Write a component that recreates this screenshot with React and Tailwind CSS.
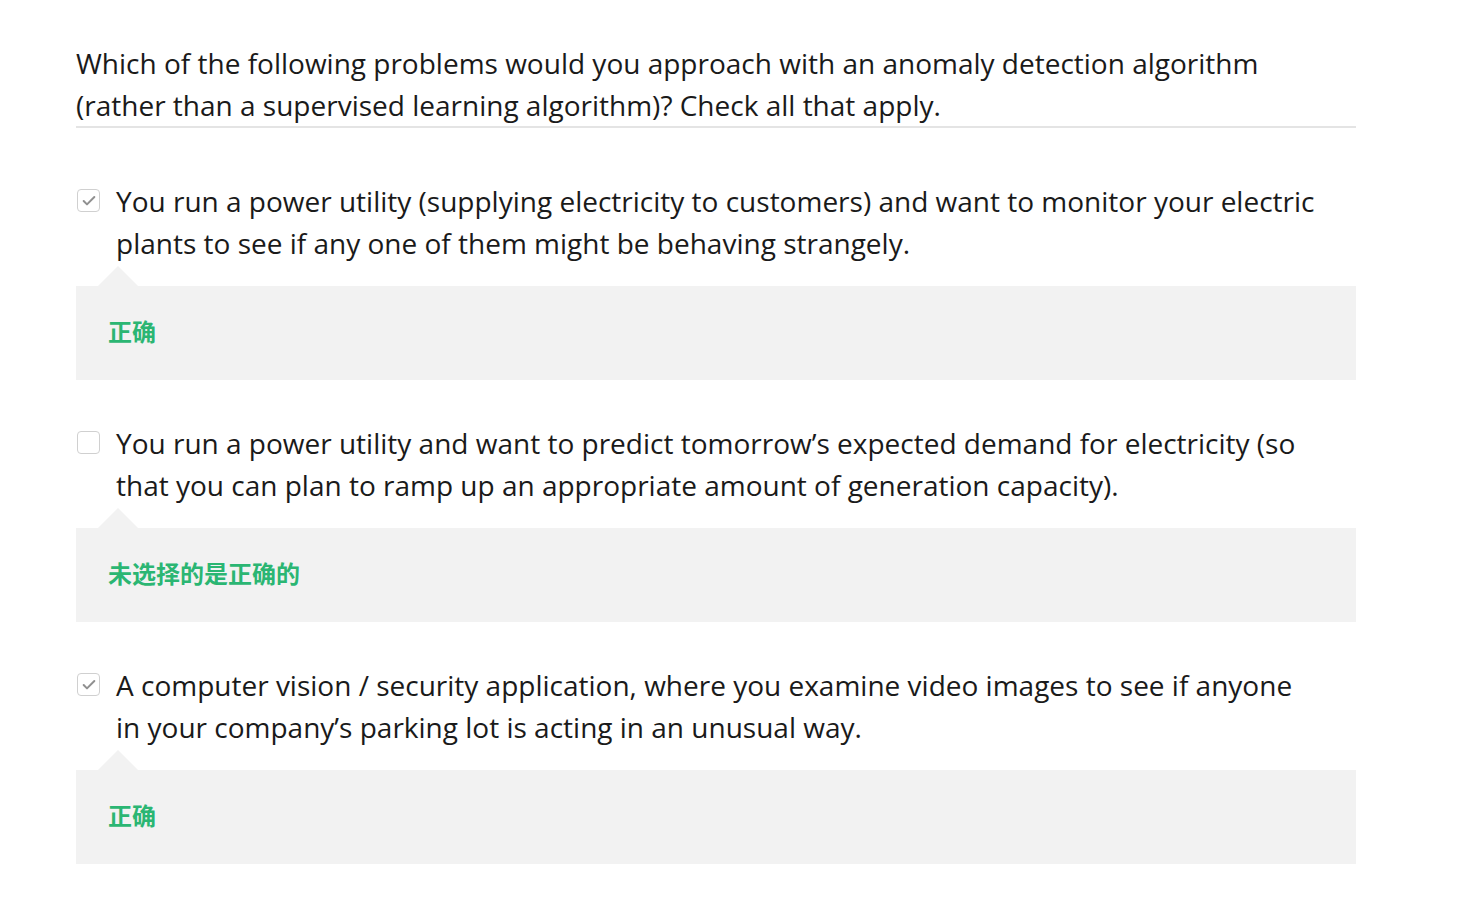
import { Check } from "lucide-react";

const options = [
  {
    text: "You run a power utility (supplying electricity to customers) and want to monitor your electric plants to see if any one of them might be behaving strangely.",
    checked: true,
    feedback: "正确",
  },
  {
    text: "You run a power utility and want to predict tomorrow’s expected demand for electricity (so that you can plan to ramp up an appropriate amount of generation capacity).",
    checked: false,
    feedback: "未选择的是正确的",
  },
  {
    text: "A computer vision / security application, where you examine video images to see if anyone in your company’s parking lot is acting in an unusual way.",
    checked: true,
    feedback: "正确",
  },
];

function Option({ text, checked, feedback }) {
  return (
    <div className="flex flex-col">
      <div className="flex flex-row items-start">
        <div className="w-[23px] h-[23px] mt-[9px] ml-px shrink-0 rounded-[4px] border border-[#d0d0d0] bg-white flex items-center justify-center">
          {checked && <Check className="w-[16px] h-[16px] text-[#909090]" strokeWidth={3} />}
        </div>
        <p className="ml-[16px] pr-[40px] text-[28px] leading-[42px] text-[#1a1a1a]">{text}</p>
      </div>
      <div className="relative mt-[22px] bg-[#f2f2f2] h-[94px] px-[32px] pb-[5px] flex items-center">
        <div className="absolute left-[22px] -top-[20px] w-0 h-0 border-l-[20px] border-r-[20px] border-b-[20px] border-l-transparent border-r-transparent border-b-[#f2f2f2]" />
        <span className="text-[24px] font-bold text-[#2bb673] leading-none" style={{ fontFamily: '"Noto Sans CJK SC", sans-serif' }}>
          {feedback}
        </span>
      </div>
    </div>
  );
}

export default function App() {
  return (
    <div className="w-[1460px] h-[906px] bg-white" style={{ fontFamily: '"Open Sans", "Noto Sans CJK SC", sans-serif' }}>
      <div className="ml-[76px] w-[1280px] pt-[42px]">
        <div className="border-b-2 border-[#e4e4e4]">
          <p className="pr-[80px] text-[28px] leading-[42px] text-[#1a1a1a]">
            Which of the following problems would you approach with an anomaly detection algorithm (rather than a supervised learning algorithm)? Check all that apply.
          </p>
        </div>
        <div className="mt-[52px] flex flex-col gap-[42px]">
          {options.map((o, i) => (
            <Option key={i} {...o} />
          ))}
        </div>
      </div>
    </div>
  );
}
